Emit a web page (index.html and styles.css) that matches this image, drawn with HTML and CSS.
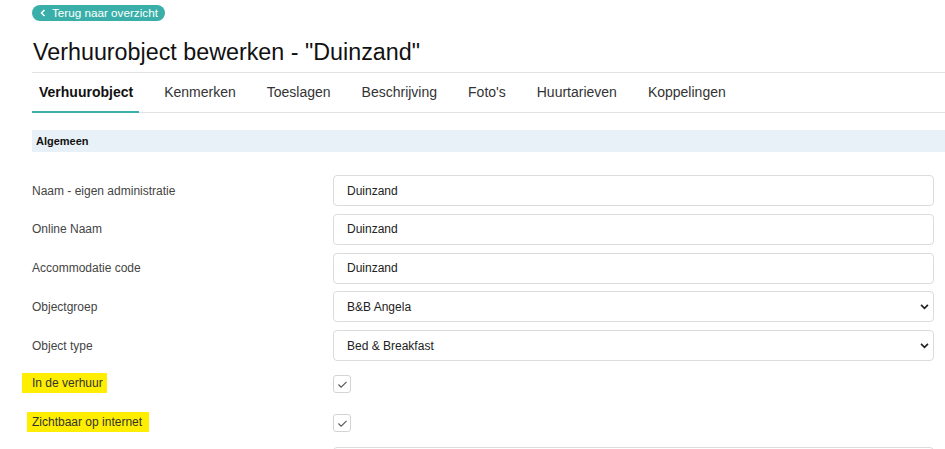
FILE: index.html
```html
<!DOCTYPE html>
<html lang="nl">
<head>
<meta charset="utf-8">
<title>Verhuurobject bewerken</title>
<link rel="stylesheet" href="styles.css">
</head>
<body>
<div class="page">
  <a class="back-btn" href="#">
    <svg class="back-icon" viewBox="0 0 8 10" width="6" height="8"><path d="M6 1 L2 5 L6 9" fill="none" stroke="#fff" stroke-width="2"/></svg>
    <span>Terug naar overzicht</span>
  </a>
  <h1 class="title">Verhuurobject bewerken - "Duinzand"</h1>
  <nav class="tabs">
    <a class="tab active" href="#">Verhuurobject</a>
    <a class="tab" href="#">Kenmerken</a>
    <a class="tab" href="#">Toeslagen</a>
    <a class="tab" href="#">Beschrijving</a>
    <a class="tab" href="#">Foto's</a>
    <a class="tab" href="#">Huurtarieven</a>
    <a class="tab" href="#">Koppelingen</a>
  </nav>
  <div class="section-head">Algemeen</div>
  <div class="form">
    <div class="row">
      <label class="label">Naam - eigen administratie</label>
      <div class="control"><div class="input">Duinzand</div></div>
    </div>
    <div class="row">
      <label class="label">Online Naam</label>
      <div class="control"><div class="input">Duinzand</div></div>
    </div>
    <div class="row">
      <label class="label">Accommodatie code</label>
      <div class="control"><div class="input">Duinzand</div></div>
    </div>
    <div class="row">
      <label class="label">Objectgroep</label>
      <div class="control"><div class="input select">B&amp;B Angela
        <svg class="chev" viewBox="0 0 10 7" width="9" height="6"><path d="M1 1 L5 5 L9 1" fill="none" stroke="#222" stroke-width="2"/></svg></div></div>
    </div>
    <div class="row">
      <label class="label">Object type</label>
      <div class="control"><div class="input select">Bed &amp; Breakfast
        <svg class="chev" viewBox="0 0 10 7" width="9" height="6"><path d="M1 1 L5 5 L9 1" fill="none" stroke="#222" stroke-width="2"/></svg></div></div>
    </div>
    <div class="row">
      <label class="label"><span class="mark mark-a">In de verhuur</span></label>
      <div class="control"><span class="checkbox"><svg viewBox="0 0 12 10" width="11" height="9"><path d="M1.5 5 L4.5 8 L10.5 2" fill="none" stroke="#555" stroke-width="1.2"/></svg></span></div>
    </div>
    <div class="row">
      <label class="label"><span class="mark mark-b">Zichtbaar op internet</span></label>
      <div class="control"><span class="checkbox"><svg viewBox="0 0 12 10" width="11" height="9"><path d="M1.5 5 L4.5 8 L10.5 2" fill="none" stroke="#555" stroke-width="1.2"/></svg></span></div>
    </div>
    <div class="row">
      <label class="label"></label>
      <div class="control"><div class="input"></div></div>
    </div>
  </div>
</div>
</body>
</html>
```
FILE: styles.css
```css
html, body {
  margin: 0;
  padding: 0;
  background: #fff;
  overflow: hidden;
}
body {
  font-family: "Liberation Sans", Arial, sans-serif;
  color: #333;
}
.page {
  padding: 3px 0 0 32px;
}
.back-btn {
  display: inline-flex;
  align-items: center;
  gap: 6px;
  height: 16px;
  padding: 0 7px 0 8px;
  border-radius: 8px;
  background: #3aafa9;
  color: #fff;
  font-size: 11.7px;
  text-decoration: none;
  line-height: 16px;
}
.back-icon {
  display: block;
}
.title {
  margin: 16px 0 0;
  padding: 0 0 4px 1px;
  font-size: 23.3px;
  line-height: 31px;
  font-weight: normal;
  color: #111;
  border-bottom: 1px solid #e2e2e2;
}
.tabs {
  display: flex;
  gap: 18px;
  height: 39px;
  border-bottom: 1px solid #e2e2e2;
}
.tab {
  display: flex;
  align-items: center;
  padding: 0 6px 0 7px;
  font-size: 14px;
  color: #333;
  text-decoration: none;
  border-bottom: 2px solid transparent;
  margin-bottom: -1px;
}
.tab.active {
  font-weight: bold;
  color: #111;
  border-bottom-color: #3aafa9;
}
.section-head {
  margin-top: 17px;
  height: 22px;
  line-height: 22px;
  padding-left: 4px;
  background: #e8f1f8;
  font-size: 11px;
  font-weight: bold;
  color: #111;
}
.form {
  display: flex;
  flex-direction: column;
  gap: 7.8px;
  margin-top: 23px;
}
.row {
  display: flex;
  align-items: center;
  height: 31px;
}
.label {
  width: 301px;
  flex: none;
  font-size: 12px;
  color: #444;
}
.control {
  width: 601px;
  flex: none;
  display: flex;
  align-items: center;
}
.input {
  box-sizing: border-box;
  width: 100%;
  height: 31px;
  border: 1px solid #dcdcdc;
  border-radius: 4px;
  padding: 0 13px;
  display: flex;
  align-items: center;
  font-size: 12px;
  color: #222;
}
.select {
  justify-content: space-between;
  padding-right: 4px;
}
.chev {
  display: block;
}
.checkbox {
  box-sizing: border-box;
  width: 18px;
  height: 18px;
  border: 1px solid #d4d4d4;
  border-radius: 3px;
  display: flex;
  align-items: center;
  justify-content: center;
}
.mark {
  background: #ffee00;
  display: inline-block;
  line-height: 20px;
  color: #333;
  position: relative;
  top: -1.5px;
}
.mark-a {
  margin-left: -10px;
  padding: 0 4px 0 10px;
}
.mark-b {
  margin-left: -5px;
  padding: 0 7px 0 5px;
}
```
